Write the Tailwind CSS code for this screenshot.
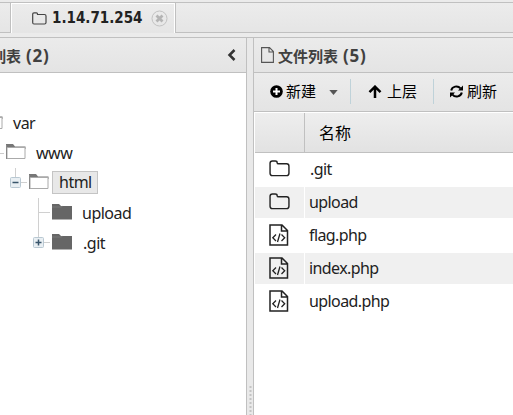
<!DOCTYPE html>
<html lang="zh">
<head>
<meta charset="utf-8">
<title>1.14.71.254</title>
<script src="https://cdn.jsdelivr.net/npm/@tailwindcss/browser@4"></script>
</head>
<body class="w-[513px] h-[415px] overflow-hidden bg-[#e6e6e6] text-[#222] text-[16px] leading-none font-['Noto_Sans','Noto_Sans_CJK_SC',sans-serif]">
<svg class="hidden">
  <symbol id="folder" viewBox="0 0 22 18"><path d="M1 14V3.500Q1 1 3.500 1H6.500Q8.500 1 8.500 2.800Q8.500 4 10 4H18.500Q21 4 21 6.500V14Q21 16.500 18.500 16.500H3.500Q1 16.500 1 14Z" fill="none" stroke="#222" stroke-width="1.500"/></symbol>
  <symbol id="code" viewBox="0 0 20 22"><path d="M1 1H13L18.500 6.500V21H1ZM12.500 1V7H18.500" fill="none" stroke="#222" stroke-width="1.500"/><path d="M7 10.500L3.800 13.700L7 17M12.500 10.500L15.700 13.700L12.500 17M11 9.500L8.500 18" fill="none" stroke="#222" stroke-width="1.300"/></symbol>
  <symbol id="open" viewBox="0 0 20 16"><path d="M0 0H7L9 2.500H19.500V5H0Z" fill="#777"/><path d="M1 3.500H19V14.500H1Z" fill="#fff" stroke="#aaa"/><path d="M.5 1V15" stroke="#888"/></symbol>
  <symbol id="closed" viewBox="0 0 20 16"><path d="M0 0H7L9 2H20V15.500H0Z" fill="#666"/><path d="M0 3H9L10.500 2.300" fill="none" stroke="#888" stroke-width=".6"/></symbol>
</svg>
<div class="flex flex-col h-[415px]">
  <div class="h-[37px] shrink-0 pt-[2px] bg-[#ebebeb]">
    <div class="flex h-[31px] border-t border-[#c0c0c0] bg-linear-to-b from-[#ececec] to-[#e5e5e5]">
      <div class="w-[11px] border-r border-b border-[#c0c0c0]"></div>
      <div class="w-[164px] flex items-center pl-[20px] pb-[1px] border-l border-t border-r border-white">
        <svg class="w-[15px] h-[13px] shrink-0" viewBox="0 0 15 13"><path d="M.7 10.500V2Q.7 .8 2 .8H4.500Q5.500 .8 5.500 2V2.500H12.500Q14 2.500 14 4V10.500Q14 12 12.500 12H2Q.7 12 .7 10.500Z" fill="none" stroke="#444" stroke-width="1.200"/></svg>
        <span class="w-[92px] ml-[5px] text-[15px] font-bold whitespace-nowrap font-['DejaVu_Sans_Condensed','DejaVu_Sans',sans-serif] font-stretch-condensed">1.14.71.254</span>
        <svg class="w-[17px] h-[17px] ml-[7px] shrink-0" viewBox="0 0 17 17"><circle cx="8.500" cy="8.500" r="7.500" fill="none" stroke="#c2c2c2"/><path d="M5.500 5.500L11.500 11.500M11.500 5.500L5.500 11.500" stroke="#b4b4b4" stroke-width="2.800"/></svg>
      </div>
      <div class="flex-1 border-l border-b border-[#c0c0c0]"></div>
    </div>
  </div>
  <div class="flex flex-1 border-t border-[#c0c0c0]">
    <section class="w-[247px] border-r border-[#c0c0c0] flex flex-col bg-white">
      <header class="h-[35px] border-b border-[#c0c0c0] bg-linear-to-b from-[#ebebeb] to-[#e4e4e4] flex items-center justify-between pr-[10px]">
        <span class="-ml-[9px] text-[15px] font-bold text-[#404040] whitespace-nowrap">列表<span class="ml-[5px] text-[17px] tracking-[0.8px]">(2)</span></span>
        <svg class="w-[9px] h-[12px]" viewBox="0 0 9 12"><path d="M7.500 1L2.500 6L7.500 11" fill="none" stroke="#333" stroke-width="2.500"/></svg>
      </header>
      <div class="pt-[35px] tracking-[-0.5px]">
        <div class="h-[30px] flex items-center"><svg class="w-[20px] h-[16px] -ml-[17px] shrink-0 -mt-[2px]"><use href="#open"/></svg><span class="ml-[10px]">var</span></div>
        <div class="h-[30px] flex items-center"><i class="w-[4px] h-px bg-[#ccc] mr-[2px]"></i><svg class="w-[20px] h-[16px] -mt-[3px]"><use href="#open"/></svg><span class="ml-[10px]">www</span></div>
        <div class="h-[30px] flex items-center">
          <svg class="w-[29px] h-[30px]" viewBox="0 0 29 30"><path d="M15.500 0V10M20 14.500H27" stroke="#d0d0d0"/><rect x="10.500" y="9.500" width="10" height="10" rx="1" fill="#e9eff3" stroke="#b9c8d2"/><path d="M12.500 14.500H18.500" stroke="#39556b" stroke-width="1.500"/></svg>
          <svg class="w-[20px] h-[16px] -mt-[3px]"><use href="#open"/></svg>
          <span class="ml-[3px] -mt-px w-[46px] h-[23px] pl-[6px] pb-px flex items-center border border-[#c4c4c4] bg-[#e8e8e8]">html</span>
        </div>
        <div class="h-[30px] flex items-center"><svg class="w-[52px] h-[30px]" viewBox="0 0 52 30"><path d="M38.500 0V30M39 14.500H50" stroke="#d0d0d0"/></svg><svg class="w-[20px] h-[16px] -mt-[3px]"><use href="#closed"/></svg><span class="ml-[10px]">upload</span></div>
        <div class="h-[30px] flex items-center"><svg class="w-[52px] h-[30px]" viewBox="0 0 52 30"><path d="M38.500 0V9M44 14.500H50" stroke="#d0d0d0"/><rect x="33.500" y="9.500" width="10" height="10" rx="1" fill="#e9eff3" stroke="#b9c8d2"/><path d="M35.500 14.500H41.500M38.500 11.500V17.500" stroke="#39556b" stroke-width="1.500"/></svg><svg class="w-[20px] h-[16px] -mt-[3px]"><use href="#closed"/></svg><span class="ml-[11px]">.git</span></div>
      </div>
    </section>
    <div class="w-[6px] flex items-end justify-center bg-[#e9e9e9]"><svg class="w-[3px] h-[29px]" viewBox="0 0 3 29"><path d="M1.500 0V29" stroke="#c4c4c4" stroke-width="2" stroke-dasharray="2 2"/></svg></div>
    <section class="flex-1 border-l border-[#c0c0c0] flex flex-col bg-white">
      <header class="h-[35px] border-b border-[#c0c0c0] bg-linear-to-b from-[#ebebeb] to-[#e4e4e4] flex items-center pl-[7px]">
        <svg class="w-[13px] h-[16px]" viewBox="0 0 13 16"><path d="M.6 .6H8.500L12.400 4.500V15.400H.6ZM8 .6V5H12.400" fill="none" stroke="#555" stroke-width="1.100"/></svg>
        <span class="ml-[4px] text-[15px] font-bold text-[#404040] whitespace-nowrap">文件列表<span class="ml-[5px] text-[17px] tracking-[0.8px]">(5)</span></span>
      </header>
      <div class="h-[39px] pb-[2px] border-b border-[#c0c0c0] bg-linear-to-b from-[#ececec] to-[#e4e4e4] flex items-center text-[15px] text-black whitespace-nowrap">
        <svg class="w-[13px] h-[13px] ml-[16px]" viewBox="0 0 13 13"><circle cx="6.500" cy="6.500" r="6.300"/><path d="M6.500 3V10M3 6.500H10" stroke="#fff" stroke-width="2"/></svg>
        <span class="ml-[3px] w-[31px]">新建</span>
        <svg class="w-[9px] h-[5px] ml-[12px] mt-[2px]" viewBox="0 0 10 6"><path d="M0 0H10L5 6Z" fill="#555"/></svg>
        <i class="w-px h-[25px] ml-[12px] bg-[#bfd2d9]"></i>
        <svg class="w-[14px] h-[13px] ml-[17px]" viewBox="0 0 14 13"><path d="M7 13V2M1.500 7.200L7 1.700L12.500 7.200" fill="none" stroke="#000" stroke-width="2.500"/></svg>
        <span class="ml-[5px] w-[31px]">上层</span>
        <i class="w-px h-[25px] ml-[15px] bg-[#bfd2d9]"></i>
        <svg class="w-[13px] h-[13px] ml-[16px]" viewBox="0 0 13 13"><path d="M1.200 5.500A5.300 5 0 0 1 10.500 3.300M11.800 7.500A5.300 5 0 0 1 2.500 9.700" fill="none" stroke="#000" stroke-width="2"/><path d="M13 .5V5.500H8ZM0 12.500V7.500H5Z"/></svg>
        <span class="ml-[4px]">刷新</span>
      </div>
      <div class="pl-px pt-px">
        <div class="flex h-[40px] mb-px text-black">
          <div class="w-[50px] border-r border-b border-[#c0c0c0] bg-linear-to-b from-[#eee] to-[#e2e2e2]"></div>
          <div class="flex-1 pl-[14px] flex items-center border-b border-[#c0c0c0] bg-linear-to-b from-[#eee] to-[#e2e2e2]">名称</div>
        </div>
        <div class="grid grid-cols-[49px_1fr] auto-rows-[31px] gap-x-px gap-y-[2px] tracking-[-0.6px] *:flex *:items-center *:pb-[2px]">
          <div class="pl-[14px]"><svg class="w-[21px] h-[17px]"><use href="#folder"/></svg></div><div class="pl-[5px]">.git</div>
          <div class="pl-[14px] bg-[#f0f0f0]"><svg class="w-[21px] h-[17px]"><use href="#folder"/></svg></div><div class="pl-[4px] bg-[#f0f0f0]">upload</div>
          <div class="pl-[14px]"><svg class="w-[20px] h-[22px]"><use href="#code"/></svg></div><div class="pl-[4px]">flag.php</div>
          <div class="pl-[14px] bg-[#f0f0f0]"><svg class="w-[20px] h-[22px]"><use href="#code"/></svg></div><div class="pl-[4px] bg-[#f0f0f0]">index.php</div>
          <div class="pl-[14px]"><svg class="w-[20px] h-[22px]"><use href="#code"/></svg></div><div class="pl-[4px]">upload.php</div>
        </div>
      </div>
    </section>
  </div>
</div>
</body>
</html>
